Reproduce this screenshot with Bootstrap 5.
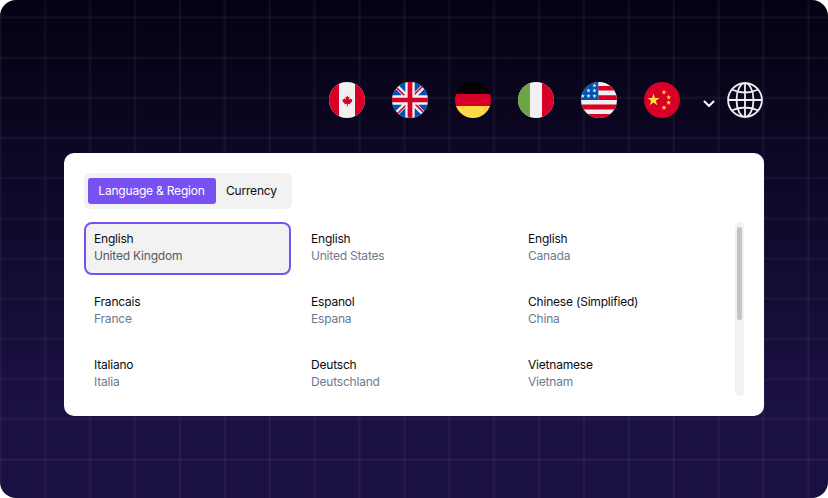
<!DOCTYPE html>
<html lang="en">
<head>
    <meta charset="UTF-8">
    <title>Language &amp; Region</title>
    <link href="https://cdn.jsdelivr.net/npm/bootstrap@5.3.2/dist/css/bootstrap.min.css" rel="stylesheet">
    <style>
        html, body { height: 498px; overflow: hidden; background: #fff; }
        body { font-family: Inter, "Liberation Sans", sans-serif; }
        .stage {
            width: 828px;
            height: 498px;
            padding: 82px 64px 0;
            border-radius: 16px;
            overflow: hidden;
            background:
                linear-gradient(90deg, rgba(255,255,255,.02) 0 .5px, rgba(255,255,255,.045) .5px 2.500px, rgba(255,255,255,.02) 2.500px 3px, transparent 3px) 43.500px 0 / 44.900px 100% repeat-x,
                linear-gradient(180deg, rgba(255,255,255,.02) 0 .5px, rgba(255,255,255,.04) .5px 2.500px, rgba(255,255,255,.02) 2.500px 3px, transparent 3px) 0 15.800px / 100% 40.200px repeat-y,
                linear-gradient(180deg, #030212 0%, #1b1042 80%, #1b1042 100%);
        }
        .flag-bar { height: 36px; gap: 27px; margin-right: 1px; margin-bottom: 35px; }
        .flag-bar svg { display: block; width: 36px; height: 36px; flex: none; }
        .flag-bar .chev { width: 12px; height: 8px; margin: 7px -15px 0 -4px; }
        .panel {
            height: 263px;
            padding: 20px 20px 0;
            background: #fff;
            border-radius: 10px;
            overflow: hidden;
        }
        .tabs-wrap {
            width: 208px;
            height: 36px;
            padding: 4px;
            background: #f2f2f2;
            border-radius: 6px;
            margin-bottom: 13px;
        }
        .tab-item {
            flex: none;
            height: 26px;
            padding: 0 10px;
            font-size: 12px;
            letter-spacing: -.2px;
            line-height: 26px;
            color: #0b0b0f;
            border-radius: 3px;
        }
        .tab-item.on { width: 128px; padding: 0 1px 0 0; text-align: center; background: #7950f2; color: #fff; }
        .lang-grid {
            display: grid;
            grid-template-columns: repeat(3, 207px);
            column-gap: 10px;
            row-gap: 10px;
            width: 641px;
        }
        .lang-cell {
            height: 53px;
            padding: 6px 8px;
            border: 2px solid transparent;
            border-radius: 8px;
            font-size: 12px;
            letter-spacing: -.2px;
            line-height: 17px;
        }
        .lang-cell.on { background: #f2f2f2; border-color: #7950f2; }
        .lang-cell b { display: block; font-weight: 400; color: #0b0b0f; }
        .lang-cell span { display: block; color: #6b7a90; }
        .lang-cell.on span { color: #555a62; }
        .scroll-track {
            width: 9px;
            height: 174px;
            margin-left: 10px;
            padding: 5px 2px;
            background: #f2f2f2;
            border-radius: 5px;
        }
        .scroll-thumb { height: 93px; background: #c4c4c4; border-radius: 3px; }
    </style>
</head>
<body>
<div class="stage">
    <!-- flags -->
    <div class="flag-bar d-flex justify-content-end align-items-center">
        <svg viewBox="0 0 36 36"><defs><clipPath id="c1"><circle cx="18" cy="18" r="18"/></clipPath></defs>
            <g clip-path="url(#c1)"><rect width="36" height="36" fill="#f0f0f0"/><rect width="10" height="36" fill="#d80027"/><rect x="26" width="10" height="36" fill="#d80027"/>
            <path transform="translate(18 18.600) scale(.72) translate(-18 -18)" fill="#d80027" d="M18 10.500l1.600 3 1.700-.9-.8 4.200 2.200-2 .5 1.500 2.200-.4-.7 2.400 1 .5-3.400 2.800.4 1.300-3.600-.5.1 3.400h-1.400l.1-3.400-3.600.5.4-1.300-3.400-2.800 1-.5-.7-2.400 2.200.4.5-1.500 2.200 2-.8-4.200 1.700.9z"/></g>
        </svg>
        <svg viewBox="0 0 512 512"><circle cx="256" cy="256" r="256" fill="#f0f0f0"/>
            <path fill="#0052b4" d="M52.900 100.100c-20.100 26.200-35.300 56.300-44.100 89.100h133.200zM503.200 189.200c-8.800-32.800-24-62.900-44.100-89.100l-89.100 89.100zM8.800 322.800c8.800 32.800 24 62.900 44.100 89.100l89.100-89.100zM411.900 52.900c-26.200-20.100-56.300-35.300-89.100-44.100V142zM100.100 459.100c26.200 20.100 56.300 35.300 89.100 44.100V370zM189.200 8.800c-32.800 8.800-62.900 24-89.100 44.100l89.100 89.100zM322.800 503.200c32.800-8.800 62.900-24 89.100-44.100L322.800 370zM370 322.800l89.100 89.100c20.100-26.200 35.300-56.300 44.100-89.100z"/>
            <path fill="#d80027" d="M509.800 222.600H289.400V2.200C278.500.7 267.300 0 256 0s-22.500.7-33.400 2.200v220.400H2.200C.7 233.500 0 244.700 0 256s.7 22.500 2.200 33.400h220.400v220.400c10.900 1.500 22.100 2.200 33.400 2.200s22.500-.7 33.400-2.200V289.400h220.400c1.500-10.900 2.200-22.100 2.200-33.400s-.7-22.500-2.200-33.400z"/>
            <path fill="#d80027" d="M322.800 322.800L437 437c5.300-5.300 10.300-10.800 15-16.600l-97.800-97.700h-31.400zM189.200 322.800L75 437c5.300 5.300 10.800 10.300 16.600 15l97.700-97.800v-31.400zM189.200 189.200L75 75c-5.300 5.300-10.300 10.800-15 16.600l97.800 97.800h31.400zM322.800 189.200L437 75c-5.300-5.300-10.800-10.300-16.600-15l-97.700 97.800v31.400z"/>
        </svg>
        <svg viewBox="0 0 36 36"><defs><clipPath id="c3"><circle cx="18" cy="18" r="18"/></clipPath></defs>
            <g clip-path="url(#c3)"><rect width="36" height="12" fill="#000"/><rect y="12" width="36" height="12" fill="#d80027"/><rect y="24" width="36" height="12" fill="#ffda44"/></g>
        </svg>
        <svg viewBox="0 0 36 36"><defs><clipPath id="c4"><circle cx="18" cy="18" r="18"/></clipPath></defs>
            <g clip-path="url(#c4)"><rect width="36" height="36" fill="#f0f0f0"/><rect width="12" height="36" fill="#6da544"/><rect x="24" width="12" height="36" fill="#d80027"/></g>
        </svg>
        <svg viewBox="0 0 36 36"><defs><clipPath id="c5"><circle cx="18" cy="18" r="18"/></clipPath>
            <polygon id="st" points="0,-1 .225,-.309 .951,-.309 .363,.118 .588,.809 0,.382 -.588,.809 -.363,.118 -.951,-.309 -.225,-.309"/></defs>
            <g clip-path="url(#c5)"><rect width="36" height="36" fill="#f0f0f0"/>
            <path fill="#d80027" d="M17.300 3.900H36v4.700H17.300zM17.300 13.300H36V18H17.300zM0 22.600h36v4.800H0zM0 32.100h36V36H0z"/>
            <rect width="17.300" height="18" fill="#0052b4"/>
            <g fill="#f0f0f0">
                <use href="#st" transform="translate(13.500 3.500) scale(2.300)"/><use href="#st" transform="translate(7.500 8.500) scale(2.300)"/><use href="#st" transform="translate(13.500 8.500) scale(2.300)"/>
                <use href="#st" transform="translate(7.500 14) scale(2.300)"/><use href="#st" transform="translate(13.500 14) scale(2.300)"/><use href="#st" transform="translate(1.800 14) scale(2.300)"/>
            </g></g>
        </svg>
        <svg viewBox="0 0 36 36"><circle cx="18" cy="18" r="18" fill="#d80027"/>
            <defs><polygon id="st2" points="0,-1 .225,-.309 .951,-.309 .363,.118 .588,.809 0,.382 -.588,.809 -.363,.118 -.951,-.309 -.225,-.309"/></defs>
            <g fill="#ffda44">
                <use href="#st2" transform="translate(9.500 18) scale(6.500)"/>
                <use href="#st2" transform="translate(20 10.300) scale(2.700)"/>
                <use href="#st2" transform="translate(24.700 15.300) scale(2.700)"/>
                <use href="#st2" transform="translate(24.700 20.700) scale(2.700)"/>
                <use href="#st2" transform="translate(20 25.700) scale(2.700)"/>
            </g>
        </svg>
        <svg class="chev" viewBox="0 0 12 8"><path d="M1.500 1.500L6 6l4.500-4.500" fill="none" stroke="#fff" stroke-width="2" stroke-linecap="round" stroke-linejoin="round"/></svg>
        <svg viewBox="0 0 36 36" fill="none" stroke="#f0f0f0" stroke-width="1.800">
            <circle cx="18" cy="18" r="16.900"/><ellipse cx="18" cy="18" rx="8.500" ry="16.900"/>
            <path d="M18 1v34M1 18h34M4.500 7.500Q18 13.500 31.500 7.500M4.500 28.500Q18 22.500 31.500 28.500"/>
        </svg>
    </div>

    <div class="panel">
        <div class="tabs-wrap d-flex align-items-center">
            <div class="tab-item on">Language &amp; Region</div>
            <div class="tab-item">Currency</div>
        </div>
        <div class="d-flex align-items-start">
            <div class="lang-grid">
                <div class="lang-cell on"><b>English</b><span>United Kingdom</span></div>
                <div class="lang-cell"><b>English</b><span>United States</span></div>
                <div class="lang-cell"><b>English</b><span>Canada</span></div>
                <div class="lang-cell"><b>Francais</b><span>France</span></div>
                <div class="lang-cell"><b>Espanol</b><span>Espana</span></div>
                <div class="lang-cell"><b>Chinese (Simplified)</b><span>China</span></div>
                <div class="lang-cell"><b>Italiano</b><span>Italia</span></div>
                <div class="lang-cell"><b>Deutsch</b><span>Deutschland</span></div>
                <div class="lang-cell"><b>Vietnamese</b><span>Vietnam</span></div>
            </div>
            <div class="scroll-track"><div class="scroll-thumb"></div></div>
        </div>
    </div>
</div>
<script src="https://cdn.jsdelivr.net/npm/bootstrap@5.3.2/dist/js/bootstrap.bundle.min.js"></script>
</body>
</html>
